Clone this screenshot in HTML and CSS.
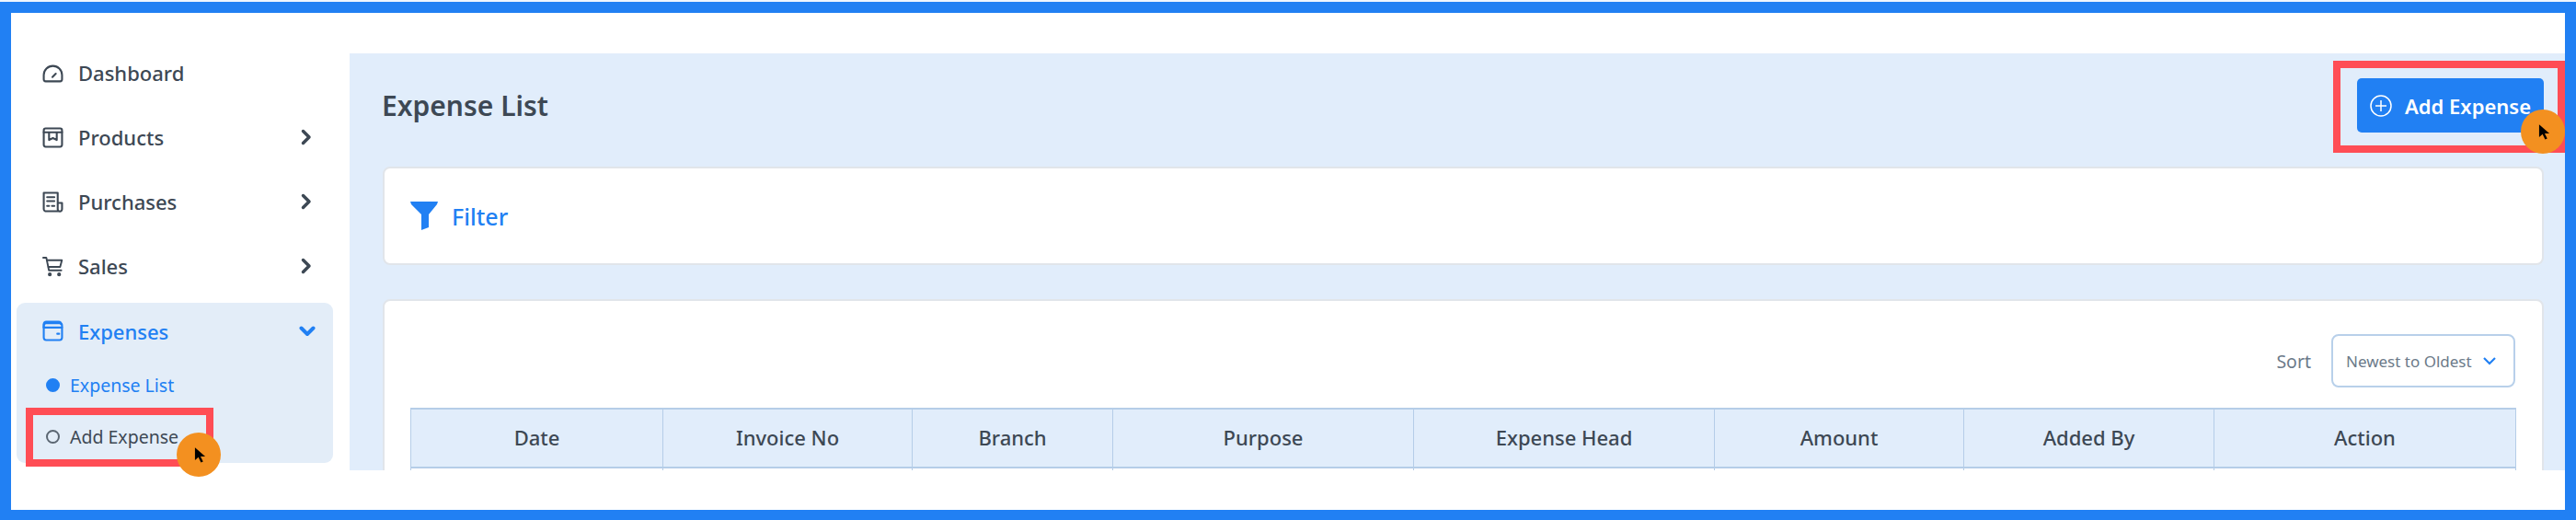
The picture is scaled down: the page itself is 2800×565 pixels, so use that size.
FILE: index.html
```html
<!DOCTYPE html>
<html>
    <head>
        <meta charset="UTF-8">
        <title>Expense List</title>
        <link rel="stylesheet" href="styles.css">
    </head>

    <body>
        <div class="frame">
            <!-- Sidebar -->
            <nav class="sidebar">
                <a class="menu-item">
                    <svg class="menu-icon" viewBox="0 0 22 22"><path d="M3.500 19.500h15a2 2 0 0 0 2-2V13a9.500 9.500 0 0 0-19 0v4.500a2 2 0 0 0 2 2z"/><path d="M10.500 15l3.500-3.500"/></svg>
                    <span>Dashboard</span>
                </a>
                <a class="menu-item">
                    <svg class="menu-icon" viewBox="0 0 22 22"><rect x="1.500" y="1.500" width="19" height="19" rx="2"/><path d="M1.500 5.500h19"/><path d="M7 6v7.500l4-2 4 2V6"/></svg>
                    <span>Products</span>
                    <svg class="chevron" viewBox="0 0 12 18"><path d="M2.500 2.500l6.500 6.500-6.500 6.500"/></svg>
                </a>
                <a class="menu-item">
                    <svg class="menu-icon" viewBox="0 0 22 22"><path d="M16 20.500H3a2 2 0 0 1-1.500-2V1.500h14.500v17a2 2 0 0 0 4.500 0v-6.500H16"/><path d="M5 6h7.500M5 10h7.500M5 15h2M10 15h2.500"/></svg>
                    <span>Purchases</span>
                    <svg class="chevron" viewBox="0 0 12 18"><path d="M2.500 2.500l6.500 6.500-6.500 6.500"/></svg>
                </a>
                <a class="menu-item">
                    <svg class="menu-icon" viewBox="0 0 24 24"><path d="M1 2h3.500l3 14.500h14"/><path d="M5.200 5h17l-2 7.500H7"/><circle cx="8.500" cy="21" r="1.200"/><circle cx="19" cy="21" r="1.200"/></svg>
                    <span>Sales</span>
                    <svg class="chevron" viewBox="0 0 12 18"><path d="M2.500 2.500l6.500 6.500-6.500 6.500"/></svg>
                </a>

                <div class="menu-group">
                    <a class="menu-item menu-item-active">
                        <svg class="menu-icon" viewBox="0 0 22 22"><rect x="1.500" y="3" width="19" height="17.500" rx="2.500"/><path d="M1.500 7.500V4a2.500 2.500 0 0 1 2.500-2.500h13a2.500 2.500 0 0 1 2.500 2.500"/><path d="M1.500 7.500h19"/><path d="M15.500 14h2"/></svg>
                        <span>Expenses</span>
                        <svg class="chevron chevron-down" viewBox="0 0 18 12"><path d="M2.500 2.500l6.500 6.500 6.500-6.500"/></svg>
                    </a>
                    <a class="sub-item sub-item-active"><i class="bullet"></i>Expense List</a>
                    <a class="sub-item"><i class="bullet"></i>Add Expense</a>
                </div>
            </nav>

            <!-- Main content -->
            <main class="panel">
                <div class="panel-head">
                    <h1>Expense List</h1>
                    <button class="add-btn">
                        <svg viewBox="0 0 24 24"><circle cx="12" cy="12" r="11"/><path d="M12 6v12M6 12h12"/></svg>
                        Add Expense
                    </button>
                </div>

                <div class="card filter-card">
                    <svg class="filter-icon" viewBox="0 0 30 31"><path d="M0 0h30l-1 3-9 11v14l-8 3V14L1 3z"/></svg>
                    <span>Filter</span>
                </div>

                <div class="card list-card">
                    <div class="sort-row">
                        <span class="sort-label">Sort</span>
                        <div class="sort-select">
                            Newest to Oldest
                            <svg viewBox="0 0 16 10"><path d="M2 2l6 6 6-6"/></svg>
                        </div>
                    </div>

                    <table class="expense-table">
                        <colgroup>
                            <col class="col-a"><col class="col-b"><col class="col-c"><col class="col-d">
                            <col class="col-d"><col class="col-b"><col class="col-e"><col class="col-f">
                        </colgroup>
                        <thead>
                            <tr>
                                <th>Date</th>
                                <th>Invoice No</th>
                                <th>Branch</th>
                                <th>Purpose</th>
                                <th>Expense Head</th>
                                <th>Amount</th>
                                <th>Added By</th>
                                <th>Action</th>
                            </tr>
                        </thead>
                        <tbody>
                            <tr>
                                <td></td><td></td><td></td><td></td>
                                <td></td><td></td><td></td><td></td>
                            </tr>
                        </tbody>
                    </table>
                </div>
            </main>

            <!-- Tutorial highlights -->
            <div class="highlight highlight-side"></div>
            <div class="highlight highlight-top"></div>
            <div class="pointer pointer-side">
                <svg viewBox="0 0 14 18"><path d="M1 0v15l4-3.500 3 6 2.500-1-3-6H13z"/></svg>
            </div>
            <div class="pointer pointer-top">
                <svg viewBox="0 0 14 18"><path d="M1 0v15l4-3.500 3 6 2.500-1-3-6H13z"/></svg>
            </div>
        </div>
    </body>
</html>
```

FILE: styles.css
```css
html, body {
    margin: 0;
    background-color: #eef5fe;
}

body {
    padding-top: 2px;
    font-family: "Noto Sans", Arial, sans-serif;
    color: #3d4854;
}

.frame {
    position: relative;
    display: flex;
    align-items: flex-start;
    box-sizing: border-box;
    height: 563px;
    border: solid #2180f3;
    border-width: 12px 12px 11px 12px;
    background-color: white;
    overflow: hidden;
}

/* Sidebar */
.sidebar {
    flex: none;
    box-sizing: border-box;
    width: 368px;
    padding: 30px 18px 0 6px;
}

.menu-item {
    display: flex;
    align-items: center;
    height: 70px;
    padding: 0 23px 0 28px;
    font-size: 22px;
    font-weight: 500;
}

.menu-item span {
    flex: 1;
}

.menu-icon {
    flex: none;
    width: 23px;
    height: 23px;
    margin-right: 16px;
    fill: none;
    stroke: #3d4854;
    stroke-width: 2;
    stroke-linejoin: round;
    stroke-linecap: round;
}

.chevron {
    flex: none;
    width: 12px;
    height: 18px;
    fill: none;
    stroke: #3d4854;
    stroke-width: 3.500;
    stroke-linecap: round;
    stroke-linejoin: round;
}

.menu-group {
    box-sizing: border-box;
    height: 174px;
    margin-top: 5px;
    background-color: #e3edf8;
    border-radius: 9px;
}

.menu-group .menu-item {
    height: 61px;
}

.menu-item-active {
    color: #2180f3;
}

.menu-item-active .menu-icon {
    stroke: #2180f3;
}

.chevron-down {
    width: 18px;
    height: 12px;
    margin-right: -4px;
    stroke: #2180f3;
    stroke-width: 4;
}

.sub-item {
    display: flex;
    align-items: center;
    height: 56px;
    padding-left: 32px;
    font-size: 19.500px;
}

.bullet {
    flex: none;
    box-sizing: border-box;
    width: 15px;
    height: 15px;
    margin-right: 11px;
    border: 2px solid #5b6672;
    border-radius: 50%;
}

.sub-item-active {
    color: #2180f3;
}

.sub-item-active .bullet {
    background-color: #2180f3;
    border-color: #2180f3;
}

/* Main panel */
.panel {
    flex: 1;
    box-sizing: border-box;
    height: 453px;
    margin-top: 44px;
    padding: 0 23px 0 36px;
    background-color: #e1edfb;
    overflow: hidden;
}

.panel-head {
    display: flex;
    justify-content: space-between;
    align-items: center;
    padding: 27px 0 37px 0;
}

.panel-head h1 {
    margin: 0 0 0 -1px;
    font-size: 30px;
    font-weight: 600;
    color: #3d4854;
}

.add-btn {
    display: flex;
    align-items: center;
    gap: 14px;
    box-sizing: border-box;
    width: 203px;
    height: 59px;
    padding: 0 14px;
    border: none;
    border-radius: 5px;
    background-color: #2180f3;
    color: white;
    font-family: inherit;
    font-size: 22px;
    font-weight: 600;
    white-space: nowrap;
}

.add-btn svg {
    flex: none;
    width: 24px;
    height: 24px;
    fill: none;
    stroke: white;
    stroke-width: 1.500;
}

.card {
    box-sizing: border-box;
    background-color: white;
    border: 2px solid #e1e5ea;
    border-radius: 8px;
}

.filter-card {
    display: flex;
    align-items: center;
    gap: 15px;
    height: 107px;
    margin-bottom: 37px;
    padding-left: 28px;
    color: #2180f3;
    font-size: 25px;
    font-weight: 500;
}

.filter-icon {
    width: 30px;
    height: 31px;
    fill: #2180f3;
}

.list-card {
    height: 300px;
    padding: 36px 29px 0 28px;
}

.sort-row {
    display: flex;
    justify-content: flex-end;
    align-items: center;
    gap: 22px;
    margin-bottom: 22px;
}

.sort-label {
    font-size: 19.500px;
    color: #6c7a89;
}

.sort-select {
    display: flex;
    align-items: center;
    justify-content: space-between;
    box-sizing: border-box;
    width: 200px;
    height: 58px;
    padding: 0 18px 0 14px;
    border: 2px solid #b8d0ea;
    border-radius: 8px;
    color: #6c7a89;
    font-size: 17px;
}

.sort-select svg {
    width: 16px;
    height: 10px;
    fill: none;
    stroke: #2180f3;
    stroke-width: 2.200;
}

/* Table */
.expense-table {
    width: 2288px;
    table-layout: fixed;
    border-collapse: collapse;
}

.col-a { width: 274px; }
.col-b { width: 271px; }
.col-c { width: 218px; }
.col-d { width: 327px; }
.col-e { width: 272px; }
.col-f { width: 328px; }

.expense-table th,
.expense-table td {
    border: solid #b5cde8;
    border-width: 2px 1px;
}

.expense-table th {
    height: 60px;
    padding: 0 0 2px 0;
    background-color: #e1edfb;
    font-size: 22px;
    font-weight: 500;
    color: #3d4854;
}

.expense-table td {
    height: 60px;
}

/* Tutorial highlights */
.highlight {
    position: absolute;
    box-sizing: border-box;
    border: 8px solid #ff4d55;
}

.highlight-side {
    left: 16px;
    top: 429px;
    width: 204px;
    height: 64px;
}

.highlight-top {
    left: 2524px;
    top: 52px;
    width: 252px;
    height: 100px;
}

.pointer {
    position: absolute;
    display: flex;
    align-items: center;
    justify-content: center;
    width: 48px;
    height: 48px;
    border-radius: 50%;
    background-color: #f39020;
}

.pointer svg {
    width: 13px;
    height: 17px;
    margin-left: 3px;
    fill: black;
}

.pointer-side {
    left: 180px;
    top: 456px;
}

.pointer-top {
    left: 2728px;
    top: 105px;
}
```
